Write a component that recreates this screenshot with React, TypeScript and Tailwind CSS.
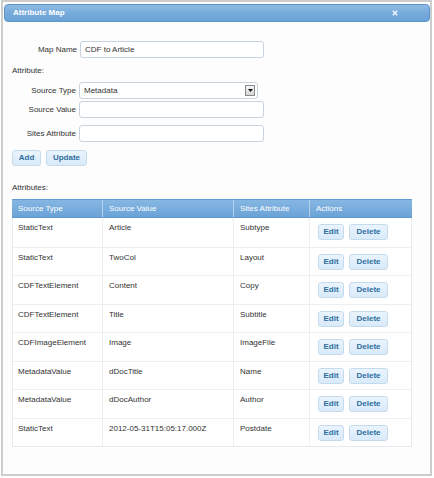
const rows = [
  ["StaticText", "Article", "Subtype"],
  ["StaticText", "TwoCol", "Layout"],
  ["CDFTextElement", "Content", "Copy"],
  ["CDFTextElement", "Title", "Subtitle"],
  ["CDFImageElement", "Image", "ImageFile"],
  ["MetadataValue", "dDocTitle", "Name"],
  ["MetadataValue", "dDocAuthor", "Author"],
  ["StaticText", "2012-05-31T15:05:17.000Z", "Postdate"],
];

function Btn({ label, w }: { label: string; w: string }) {
  return (
    <button
      className={`${w} h-[16px] rounded-[3px] border border-[#c5dbec] bg-gradient-to-b from-[#eaf4fd] to-[#d9eafa] text-[8px] font-bold leading-none text-[#2e6e9e]`}
    >
      {label}
    </button>
  );
}

export default function App() {
  return (
    <div className="h-[478px] w-[434px] bg-white pl-px font-['Liberation_Sans',Arial,sans-serif] text-[8px] text-[#333]">
      <div className="h-[476px] w-[431px] border-2 border-[#cdcdcd] bg-[#fdfdfd] p-px pt-[2px]">
        {/* title bar */}
        <div className="flex h-[18px] w-[426px] items-center justify-between rounded-[4px] border border-[#5a96cc] bg-gradient-to-b from-[#8fbce5] via-[#76aadb] to-[#6ca3d6] pl-[8px] pr-[31px]">
          <span className="text-[8px] font-bold text-white">Attribute Map</span>
          <svg width="6" height="6" viewBox="0 0 6 6">
            <path d="M0.8 0.8 L5.2 5.2 M5.2 0.8 L0.8 5.2" stroke="#eef5fc" strokeWidth="1.6" />
          </svg>
        </div>

        <div className="pl-[8px]">
          {/* Map Name */}
          <div className="mt-[19px] flex items-center">
            <span className="w-[65px] text-right">Map Name</span>
            <div className="ml-[3px] flex h-[17px] w-[184px] items-center rounded-[3px] border border-[#c9d3dd] bg-white pl-[4px]">
              CDF to Article
            </div>
          </div>

          <div className="mt-[8px] leading-[10px]">Attribute:</div>

          <div className="mt-[6px] flex items-center">
            <span className="w-[64px] text-right">Source Type</span>
            <div className="ml-[3px] flex h-[17px] w-[179px] items-center justify-between rounded-[3px] border border-[#c9d3dd] bg-white pl-[4px] pr-[2px]">
              <span>Metadata</span>
              <div className="flex h-[11px] w-[10px] items-center justify-center border border-[#8a8a8a] bg-gradient-to-b from-[#f4f4f4] to-[#d8d8d8]">
                <svg width="5" height="3" viewBox="0 0 5 3">
                  <path d="M0 0 H5 L2.5 3 Z" fill="#111" />
                </svg>
              </div>
            </div>
          </div>

          <div className="mt-[2px] flex items-center">
            <span className="w-[64px] text-right">Source Value</span>
            <div className="ml-[3px] h-[17px] w-[185px] rounded-[3px] border border-[#c9d3dd] bg-white" />
          </div>

          <div className="mt-[7px] flex items-center">
            <span className="w-[64px] text-right">Sites Attribute</span>
            <div className="ml-[3px] h-[17px] w-[185px] rounded-[3px] border border-[#c9d3dd] bg-white" />
          </div>

          <div className="mt-[8px] flex gap-[5px]">
            <Btn label="Add" w="w-[29px]" />
            <Btn label="Update" w="w-[41px]" />
          </div>

          <div className="mt-[17px] leading-[10px]">Attributes:</div>

          {/* table */}
          <div className="mt-[6px] w-[400px] border-x border-b border-[#e6eaee] bg-white">
            <div className="-mx-px grid h-[19px] grid-cols-[90px_131px_76px_103px] border-y border-[#5f9bd0] bg-gradient-to-b from-[#86b7e3] to-[#6aa2d6] text-white">
              {["Source Type", "Source Value", "Sites Attribute", "Actions"].map((h, i) => (
                <div
                  key={h}
                  className={`flex items-center pl-[6px] ${i > 0 ? "border-l border-[#b3d0ec]" : ""}`}
                >
                  {h}
                </div>
              ))}
            </div>
            {rows.map((r, idx) => (
              <div
                key={idx}
                className={`grid h-[28.5px] grid-cols-[89px_131px_76px_102px] ${idx > 0 ? "border-t border-[#eceff2]" : ""}`}
              >
                <div className="pl-[5px] pt-[5px] leading-[10px]">{r[0]}</div>
                <div className="border-l border-[#eceff2] pl-[6px] pt-[5px] leading-[10px]">{r[1]}</div>
                <div className="border-l border-[#eceff2] pl-[6px] pt-[5px] leading-[10px]">{r[2]}</div>
                <div className="flex gap-[5px] border-l border-[#eceff2] pl-[8px] pt-[6px]">
                  <Btn label="Edit" w="w-[26px]" />
                  <Btn label="Delete" w="w-[39px]" />
                </div>
              </div>
            ))}
          </div>
        </div>
      </div>
    </div>
  );
}
